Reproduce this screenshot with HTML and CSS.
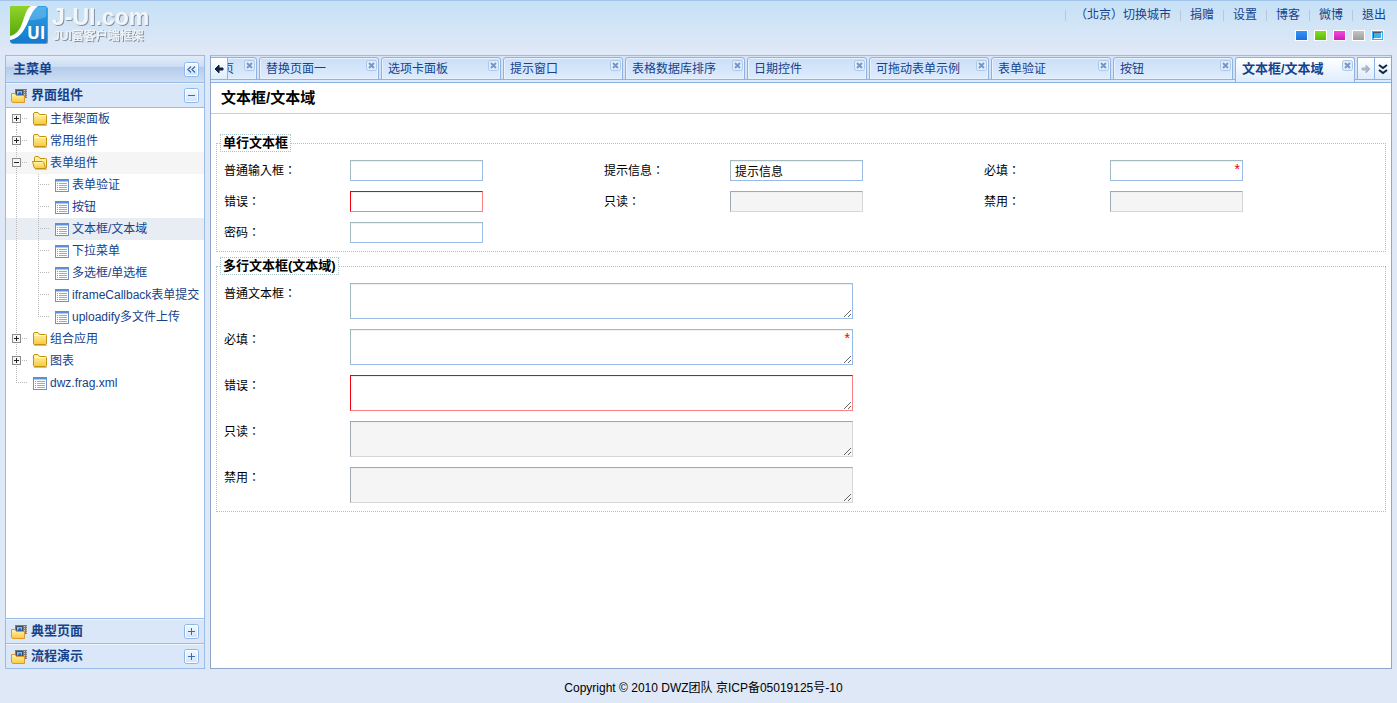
FILE: index.html
```html
<!DOCTYPE html>
<html lang="zh-CN">
<head>
<meta charset="utf-8">
<title>J-UI.com</title>
<link rel="stylesheet" href="styles.css">
</head>
<body>
<svg class="defs" width="0" height="0" aria-hidden="true">
  <defs>
    <linearGradient id="gFolder" x1="0" y1="0" x2="0" y2="1"><stop offset="0" stop-color="#fff6b4"/><stop offset="1" stop-color="#f8c93c"/></linearGradient>
    <linearGradient id="gGreen" x1="0" y1="0" x2="0" y2="1"><stop offset="0" stop-color="#8fd42a"/><stop offset="1" stop-color="#58a80c"/></linearGradient>
    <linearGradient id="gBlue" x1="0" y1="0" x2="0" y2="1"><stop offset="0" stop-color="#2aa0e6"/><stop offset="1" stop-color="#1679cc"/></linearGradient>
    <linearGradient id="gBtn" x1="0" y1="0" x2="0" y2="1"><stop offset="0" stop-color="#f4faff"/><stop offset="1" stop-color="#cfe2fa"/></linearGradient>
    <symbol id="line-v" viewBox="0 0 22 22"><path d="M10.5 0V22" stroke="#b9b9b9" stroke-dasharray="1 1" fill="none"/></symbol>
    <symbol id="line-t" viewBox="0 0 22 22"><path d="M10.5 0V22M12 10.5H21" stroke="#b9b9b9" stroke-dasharray="1 1" fill="none"/></symbol>
    <symbol id="line-l" viewBox="0 0 22 22"><path d="M10.5 0V11M12 10.5H21" stroke="#b9b9b9" stroke-dasharray="1 1" fill="none"/></symbol>
    <symbol id="box" viewBox="0 0 22 22"><rect x="6.500" y="6.500" width="8" height="8" fill="#f6f6f6" stroke="#8c8c8c"/><path d="M8 10.500H13" stroke="#222"/></symbol>
    <symbol id="plus" viewBox="0 0 22 22"><use href="#line-t"/><use href="#box"/><path d="M10.500 8V13" stroke="#222"/></symbol>
    <symbol id="plus-first" viewBox="0 0 22 22"><path d="M10.500 15V22M16 10.500H21" stroke="#b9b9b9" stroke-dasharray="1 1"/><use href="#box"/><path d="M10.500 8V13" stroke="#222"/></symbol>
    <symbol id="minus" viewBox="0 0 22 22"><use href="#line-t"/><use href="#box"/></symbol>
    <symbol id="folder" viewBox="0 0 22 22"><path d="M5.500 15.500V6Q5.500 4.500 7 4.500H10L11.500 6.500H17.500Q18.500 6.500 18.500 7.500V15.500Q18.500 16.500 17.500 16.500H6.500Q5.500 16.500 5.500 15.500Z" fill="url(#gFolder)" stroke="#c4920f"/><path d="M6.500 7.500H17.500" stroke="#fffbe0"/><path d="M6 17.500H19" stroke="#000" stroke-opacity=".25"/></symbol>
    <symbol id="folder-open" viewBox="0 0 22 22"><path d="M6.500 10V5.500Q6.500 4.500 7.500 4.500H10.500L12 6.500H17.500Q18.500 6.500 18.500 7.500V15.500Q18.500 16.500 17.500 16.500H8Z" fill="#fff09a" stroke="#c4920f"/><path d="M4.500 9.500H14.500Q15.500 9.500 16 11L17.500 16.500H7.500Q6.500 16.500 6 15Z" fill="url(#gFolder)" stroke="#c4920f"/><path d="M7 17.500H19" stroke="#000" stroke-opacity=".2"/></symbol>
    <symbol id="file" viewBox="0 0 22 22"><rect x="5.500" y="5.500" width="13" height="12" fill="#fdfdfd" stroke="#6d92c8"/><path d="M5 6H19" stroke="#5b8fd6" stroke-width="2"/><path d="M6 7.500H18" stroke="#a9ccf5"/><path d="M7 9.500H8M7 11.500H8M7 13.500H8M7 15.500H8" stroke="#4db1e8"/><path d="M9 9.500H17M9 11.500H17M9 13.500H17M9 15.500H17" stroke="#a9a9a9"/></symbol>
    <symbol id="panel" viewBox="0 0 16 15"><path d="M4 1H16V10H4Z" fill="#777a80"/><path d="M5.500 2.500H11.500V8H5.500Z" fill="#7fc0f6" stroke="#3f4854"/><path d="M6 7L9 3.500L11 7Z" fill="#1b63c8"/><path d="M13.500 2V9M15.500 2V9" stroke="#c6c6c6" stroke-dasharray="1 1"/><path d="M.5 5.500H4L5.500 7.500H13.500V14.500H1.500L.5 13Z" fill="url(#gFolder)" stroke="#e0962c"/></symbol>
    <symbol id="close" viewBox="0 0 11 11"><rect x=".5" y=".5" width="10" height="10" rx="2" fill="#e3eefb" stroke="#a9c6ec"/><path d="M3 3L8 8M8 3L3 8" stroke="#7797c8" stroke-width="2"/></symbol>
    <symbol id="btn" viewBox="0 0 15 15"><rect x=".5" y=".5" width="14" height="14" rx="2" fill="url(#gBtn)" stroke="#8db6ec"/><rect x="1.500" y="1.500" width="12" height="12" rx="1" fill="none" stroke="#fff"/></symbol>
  </defs>
</svg>

<header class="header">
  <a class="logo" href="#" aria-label="J-UI.com">
    <svg width="160" height="46" viewBox="0 0 160 46">
      <defs><filter id="sh" x="-10%" y="-10%" width="120%" height="130%"><feDropShadow dx="1" dy="1" stdDeviation=".7" flood-color="#5f6a78" flood-opacity=".7"/></filter></defs>
      <g filter="url(#sh)"><rect x="10" y="5" width="37" height="37" rx="2" fill="url(#gBlue)"/><path d="M12 5H34C24 11 27 33 10 35V7Q10 5 12 5Z" fill="url(#gGreen)"/></g>
      <path d="M38 5H31C22 10 25 32 10 35V39C28 36 27 13 38 5Z" fill="#fff"/>
      <path d="M37 6H46V16Q38 20 29 19Q32 11 37 6Z" fill="#fff" opacity=".2"/>
      <text class="logo-ui" x="27" y="38">UI</text>
      <text class="logo-name" x="52" y="24" filter="url(#sh)">J-UI.com</text>
      <text class="logo-sub" x="53" y="39" filter="url(#sh)">JUI富客户端框架</text>
    </svg>
  </a>
  <div class="tools">
    <nav class="nav" lang="zh-TW">
      <a href="#">（北京）切换城市</a><a href="#">捐赠</a><a href="#">设置</a><a href="#">博客</a><a href="#">微博</a><a href="#">退出</a>
    </nav>
    <div class="themes">
      <button class="theme blue" aria-label="蓝色"></button>
      <button class="theme green" aria-label="绿色"></button>
      <button class="theme purple" aria-label="紫色"></button>
      <button class="theme silver" aria-label="银色"></button>
      <button class="theme azure" aria-label="天蓝"></button>
    </div>
  </div>
</header>

<div class="layout">
  <aside class="sidebar">
    <div class="side-title"><h2>主菜单</h2>
      <button class="mini" aria-label="收缩"><svg width="15" height="15"><use href="#btn"/><path d="M7 4.500L4 7.500L7 10.500M11 4.500L8 7.500L11 10.500" fill="none" stroke="#3a6cae" stroke-width="1.300"/></svg></button>
    </div>
    <div class="acc-head"><svg width="16" height="15"><use href="#panel"/></svg><h2>界面组件</h2>
      <button class="mini" aria-label="折叠"><svg width="15" height="15"><use href="#btn"/><path d="M4 7.500H11" stroke="#3a6cae"/></svg></button>
    </div>
    <div class="tree">
      <a class="row" href="#"><svg><use href="#plus-first"/></svg><svg><use href="#folder"/></svg><span>主框架面板</span></a>
      <a class="row" href="#"><svg><use href="#plus"/></svg><svg><use href="#folder"/></svg><span>常用组件</span></a>
      <a class="row hover" href="#"><svg><use href="#minus"/></svg><svg><use href="#folder-open"/></svg><span>表单组件</span></a>
      <a class="row" href="#"><svg><use href="#line-v"/></svg><svg><use href="#line-t"/></svg><svg><use href="#file"/></svg><span>表单验证</span></a>
      <a class="row" href="#"><svg><use href="#line-v"/></svg><svg><use href="#line-t"/></svg><svg><use href="#file"/></svg><span>按钮</span></a>
      <a class="row selected" href="#"><svg><use href="#line-v"/></svg><svg><use href="#line-t"/></svg><svg><use href="#file"/></svg><span>文本框/文本域</span></a>
      <a class="row" href="#"><svg><use href="#line-v"/></svg><svg><use href="#line-t"/></svg><svg><use href="#file"/></svg><span>下拉菜单</span></a>
      <a class="row" href="#"><svg><use href="#line-v"/></svg><svg><use href="#line-t"/></svg><svg><use href="#file"/></svg><span>多选框/单选框</span></a>
      <a class="row" href="#"><svg><use href="#line-v"/></svg><svg><use href="#line-t"/></svg><svg><use href="#file"/></svg><span>iframeCallback表单提交</span></a>
      <a class="row" href="#"><svg><use href="#line-v"/></svg><svg><use href="#line-l"/></svg><svg><use href="#file"/></svg><span>uploadify多文件上传</span></a>
      <a class="row" href="#"><svg><use href="#plus"/></svg><svg><use href="#folder"/></svg><span>组合应用</span></a>
      <a class="row" href="#"><svg><use href="#plus"/></svg><svg><use href="#folder"/></svg><span>图表</span></a>
      <a class="row" href="#"><svg><use href="#line-l"/></svg><svg><use href="#file"/></svg><span>dwz.frag.xml</span></a>
    </div>
    <div class="acc-head lower"><svg width="16" height="15"><use href="#panel"/></svg><h2>典型页面</h2>
      <button class="mini" aria-label="展开"><svg width="15" height="15"><use href="#btn"/><path d="M4 7.500H11M7.500 4V11" stroke="#3a6cae"/></svg></button>
    </div>
    <div class="acc-head lower"><svg width="16" height="15"><use href="#panel"/></svg><h2>流程演示</h2>
      <button class="mini" aria-label="展开"><svg width="15" height="15"><use href="#btn"/><path d="M4 7.500H11M7.500 4V11" stroke="#3a6cae"/></svg></button>
    </div>
  </aside>

  <main class="main">
    <div class="tabbar">
      <button class="scroll" aria-label="向左"><svg width="16" height="22"><path d="M4 11L8 7V10H12V12H8V15Z" fill="#10233f" stroke="#10233f"/></svg></button>
      <div class="tabs">
        <div class="tab first"><a href="#">页</a><button aria-label="关闭"><svg width="11" height="11"><use href="#close"/></svg></button></div>
        <div class="tab"><a href="#">替换页面一</a><button aria-label="关闭"><svg width="11" height="11"><use href="#close"/></svg></button></div>
        <div class="tab"><a href="#">选项卡面板</a><button aria-label="关闭"><svg width="11" height="11"><use href="#close"/></svg></button></div>
        <div class="tab"><a href="#">提示窗口</a><button aria-label="关闭"><svg width="11" height="11"><use href="#close"/></svg></button></div>
        <div class="tab"><a href="#">表格数据库排序</a><button aria-label="关闭"><svg width="11" height="11"><use href="#close"/></svg></button></div>
        <div class="tab"><a href="#">日期控件</a><button aria-label="关闭"><svg width="11" height="11"><use href="#close"/></svg></button></div>
        <div class="tab"><a href="#">可拖动表单示例</a><button aria-label="关闭"><svg width="11" height="11"><use href="#close"/></svg></button></div>
        <div class="tab"><a href="#">表单验证</a><button aria-label="关闭"><svg width="11" height="11"><use href="#close"/></svg></button></div>
        <div class="tab"><a href="#">按钮</a><button aria-label="关闭"><svg width="11" height="11"><use href="#close"/></svg></button></div>
        <div class="tab active"><a href="#">文本框/文本域</a><button aria-label="关闭"><svg width="11" height="11"><use href="#close"/></svg></button></div>
      </div>
      <button class="scroll right" aria-label="向右"><svg width="16" height="22"><path d="M12 11L8 7V10H4V12H8V15Z" fill="#a9b6c8" stroke="#a9b6c8"/></svg></button>
      <button class="scroll more" aria-label="更多"><svg width="16" height="22"><path d="M4 7L8 10L12 7M4 12L8 15L12 12" fill="none" stroke="#10233f" stroke-width="2"/></svg></button>
    </div>
    <section class="page">
      <h1>文本框/文本域</h1>
      <form class="form">
        <fieldset>
          <legend>单行文本框</legend>
          <div class="fields">
            <div class="field"><label lang="zh-TW" for="a1">普通输入框：</label><input id="a1" type="text"></div>
            <div class="field"><label lang="zh-TW" for="a2">提示信息：</label><input id="a2" type="text" value="提示信息"></div>
            <div class="field"><label lang="zh-TW" for="a3">必填：</label><div class="control"><input id="a3" type="text"><span class="star">*</span></div></div>
            <div class="field"><label lang="zh-TW" for="a4">错误：</label><input id="a4" class="error" type="text"></div>
            <div class="field"><label lang="zh-TW" for="a5">只读：</label><input id="a5" type="text" readonly></div>
            <div class="field"><label lang="zh-TW" for="a6">禁用：</label><input id="a6" type="text" disabled></div>
            <div class="field"><label lang="zh-TW" for="a7">密码：</label><input id="a7" type="password"></div>
          </div>
        </fieldset>
        <fieldset>
          <legend>多行文本框(文本域)</legend>
          <div class="fields stacked">
            <div class="field"><label lang="zh-TW" for="b1">普通文本框：</label><textarea id="b1"></textarea></div>
            <div class="field"><label lang="zh-TW" for="b2">必填：</label><div class="control"><textarea id="b2"></textarea><span class="star">*</span></div></div>
            <div class="field"><label lang="zh-TW" for="b3">错误：</label><textarea id="b3" class="error"></textarea></div>
            <div class="field"><label lang="zh-TW" for="b4">只读：</label><textarea id="b4" readonly></textarea></div>
            <div class="field"><label lang="zh-TW" for="b5">禁用：</label><textarea id="b5" disabled></textarea></div>
          </div>
        </fieldset>
      </form>
    </section>
  </main>
</div>
<footer class="footer">Copyright © 2010 DWZ团队 京ICP备05019125号-10</footer>
</body>
</html>
```
FILE: styles.css
```css
* { box-sizing: border-box; }
body {
  margin: 0;
  min-height: 100vh;
  display: flex;
  flex-direction: column;
  background: #dfe8f6;
  color: #000;
  font: 12px/18px "Liberation Sans", "Noto Sans CJK SC", sans-serif;
}
h1, h2 { margin: 0; }
a { color: #15428b; text-decoration: none; }
svg { display: block; flex: none; }
button { padding: 0; border: 0; background: none; cursor: pointer; }
.defs { position: absolute; }

.header {
  display: flex;
  justify-content: space-between;
  height: 55px;
  border-top: 1px solid #a3c3ea;
  background: linear-gradient(#c5e1f6, #dfe8f6 50px);
}
.logo-ui { font: bold 17px "Open Sans", sans-serif; fill: #fff; }
.logo-name { font: bold 23px "Liberation Sans", sans-serif; fill: #f2f6fa; }
.logo-sub { font: bold 12px "Liberation Sans", "Noto Sans CJK SC", sans-serif; fill: #eef3f8; }
.tools {
  display: flex;
  flex-direction: column;
  align-items: flex-end;
  gap: 6px;
  padding: 5px 2px 0 0;
}
.nav {
  display: flex;
  align-items: center;
  font-family: "Liberation Sans", "Noto Sans CJK TC", sans-serif;
}
.nav a {
  display: flex;
  align-items: center;
  padding: 0 9px;
}
.nav a::before {
  content: "";
  width: 1px;
  height: 11px;
  margin: 0 9px 0 -9px;
  background: #b8c8d8;
}
.themes { display: flex; gap: 6px; padding-right: 11px; }
.theme { width: 13px; height: 11px; border: 1px solid #fff; }
.blue { background: linear-gradient(#3a93f5, #1a6fe0); }
.green { background: linear-gradient(#86dd1e, #56bc12); }
.purple { background: linear-gradient(#f04bdc, #cc1fb8); }
.silver { background: linear-gradient(#c4c4c4, #9c9c9c); }
.azure { display: flex; align-items: center; justify-content: center; background: #35b3f5; }
.azure::before { content: ""; width: 7px; height: 5px; border: 1px solid #fff; border-top-color: #555; border-left-color: #555; }

.layout { flex: 1; display: flex; gap: 5px; padding: 0 5px; }
.sidebar {
  flex: none;
  width: 200px;
  display: flex;
  flex-direction: column;
  border: 1px solid #99bbe8;
  background: #fff;
}
.sidebar h2 { flex: 1; font-size: 13px; line-height: 18px; color: #15428b; }
.mini { flex: none; }
.side-title {
  display: flex;
  align-items: center;
  height: 27px;
  padding: 0 5px 0 7px;
  border-bottom: 1px solid #99bbe8;
  background: linear-gradient(#e2ecf9, #cbdcf2 11px, #b3cbeb 11px, #cfdff4);
}
.acc-head {
  display: flex;
  align-items: center;
  gap: 4px;
  height: 25px;
  padding: 0 5px;
  border-bottom: 1px solid #99bbe8;
  background: #d9e7f8;
  box-shadow: inset 0 1px #eef5fd;
}
.acc-head.lower { border-bottom: 0; border-top: 1px solid #99bbe8; }
.tree { flex: 1; overflow: hidden; }
.row { display: flex; align-items: center; height: 22px; white-space: nowrap; }
.row svg { width: 22px; height: 22px; }
.row.hover { background: #f5f5f5; }
.row.selected { background: #e8edf3; }

.main {
  flex: 1;
  min-width: 0;
  display: flex;
  flex-direction: column;
  border: 1px solid #8da6c9;
  border-top-color: #99bbe8;
  background: #fff;
}
.tabbar {
  display: flex;
  height: 27px;
  padding-top: 1px;
  border-bottom: 1px solid #8db2e3;
  background: linear-gradient(#d6e3f5 23px, #8db2e3 23px, #8db2e3 24px, #deecfd 24px);
}
.tabs { flex: 1; min-width: 0; display: flex; justify-content: flex-end; gap: 2px; overflow: hidden; }
.tab {
  flex: none;
  width: 120px;
  height: 23px;
  display: flex;
  justify-content: space-between;
  padding: 0 1px 0 6px;
  border: 1px solid #8db2e3;
  border-radius: 3px 3px 0 0;
  background: linear-gradient(#cbdff8, #deecfd);
  box-shadow: inset 0 0 0 1px #e8f2fe;
  line-height: 22px;
}
.tab button { align-self: flex-start; padding-top: 2px; }
.tab.first { justify-content: flex-end; gap: 10px; }
.tab.active { height: 25px; border-bottom: 0; background: linear-gradient(#fff, #deecfd); font-size: 13px; font-weight: bold; box-shadow: none; }
.scroll { flex: none; width: 17px; height: 23px; border: 1px solid #8db2e3; border-left: 0; background: linear-gradient(#fff, #deecfd); }
.scroll.right, .scroll.more { border-left: 1px solid #8db2e3; border-right: 0; }
.scroll.right { margin-left: 2px; }

.page h1 {
  height: 31px;
  padding: 0 10px;
  border-bottom: 1px solid #ccc;
  font-size: 15px;
  line-height: 29px;
}
.form { padding: 20px 5px; }
fieldset {
  margin: 0 0 5px;
  padding: 3px 0;
  border: 1px dotted #a6c4cc;
}
legend {
  margin-left: 3px;
  padding: 0 2px;
  border: 1px dotted #a6c4cc;
  font-size: 13px;
  line-height: 16px;
  font-weight: bold;
}
.fields { display: flex; flex-wrap: wrap; padding-left: 7px; }
.fields.stacked { flex-direction: column; }
.field { display: flex; width: 380px; padding: 5px 0; }
.stacked .field { width: auto; }
.field label {
  flex: none;
  width: 126px;
  line-height: 22px;
  height: 21px;
  font-family: "Liberation Sans", "Noto Sans CJK TC", sans-serif;
}
.control { position: relative; }
input, textarea {
  display: block;
  margin: 0;
  border: 1px solid;
  border-color: #a2bac0 #99bbe8 #99bbe8 #a2bac0;
  border-radius: 0;
  background: #fff;
  box-shadow: inset 0 1px #f0f0f0;
  font: 12px/15px "Liberation Sans", "Noto Sans CJK SC", sans-serif;
}
input { width: 133px; height: 21px; padding: 0 4px; }
textarea { width: 503px; height: 36px; padding: 2px; resize: both; }
input.error, textarea.error { border-color: #f00011 #ff8080 #ff8080 #f00011; }
input:read-only, textarea:read-only, input:disabled, textarea:disabled {
  border-color: #a1a9b3 #d7d7d7 #d7d7d7 #a1a9b3;
  background: #f5f5f5;
}
.star { position: absolute; top: 2px; right: 3px; color: #e00; font-size: 14px; line-height: 14px; }

.footer { height: 34px; padding-left: 10px; line-height: 38px; text-align: center; }
```
